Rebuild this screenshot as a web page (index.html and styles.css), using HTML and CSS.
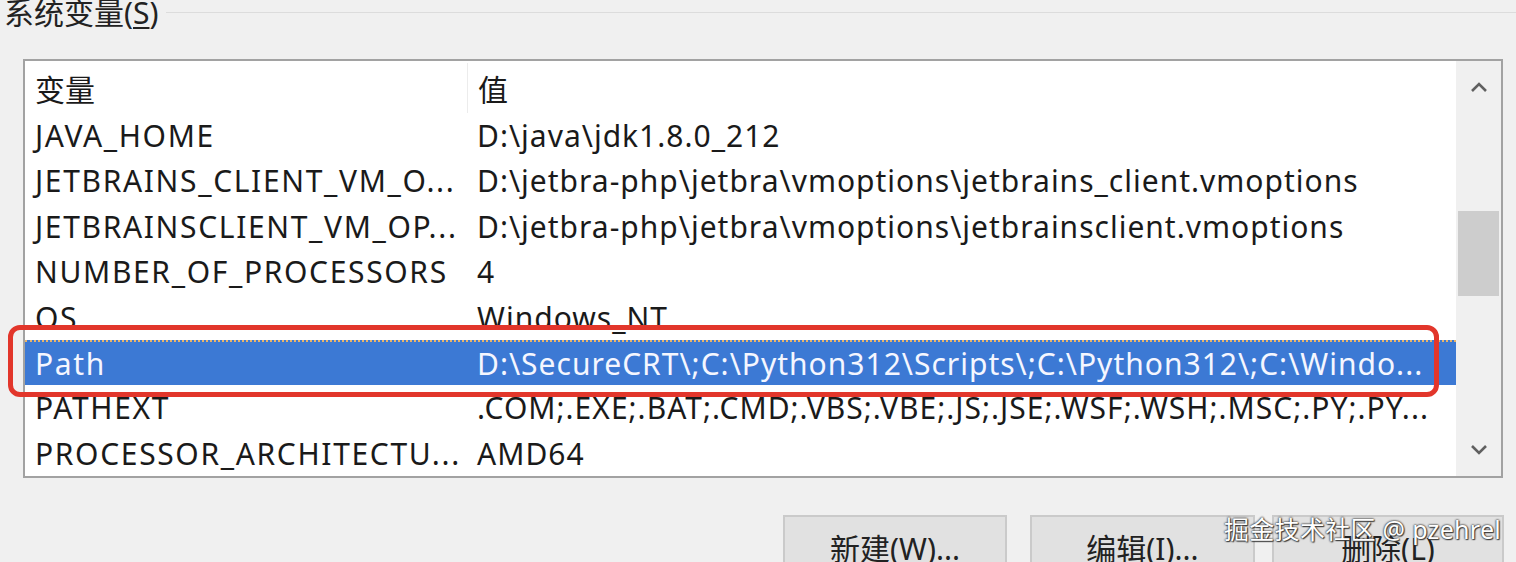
FILE: index.html
```html
<!DOCTYPE html>
<html lang="zh-CN">
<head>
<meta charset="utf-8">
<title>系统变量</title>
<link rel="stylesheet" href="styles.css">
</head>
<body>
<div class="page">
  <div class="group-title">
    <span class="title-text">系统变量(<u>S</u>)</span>
    <span class="group-line"></span>
  </div>
  <div class="listbox">
    <div class="list">
      <div class="row header">
        <div class="c1">变量</div>
        <div class="c2">值</div>
      </div>
      <div class="row"><div class="c1">JAVA_HOME</div><div class="c2">D:\java\jdk1.8.0_212</div></div>
      <div class="row"><div class="c1">JETBRAINS_CLIENT_VM_O...</div><div class="c2">D:\jetbra-php\jetbra\vmoptions\jetbrains_client.vmoptions</div></div>
      <div class="row"><div class="c1">JETBRAINSCLIENT_VM_OP...</div><div class="c2">D:\jetbra-php\jetbra\vmoptions\jetbrainsclient.vmoptions</div></div>
      <div class="row"><div class="c1">NUMBER_OF_PROCESSORS</div><div class="c2">4</div></div>
      <div class="row"><div class="c1">OS</div><div class="c2">Windows_NT</div></div>
      <div class="row selected"><div class="c1">Path</div><div class="c2">D:\SecureCRT\;C:\Python312\Scripts\;C:\Python312\;C:\Windo...</div></div>
      <div class="row"><div class="c1">PATHEXT</div><div class="c2">.COM;.EXE;.BAT;.CMD;.VBS;.VBE;.JS;.JSE;.WSF;.WSH;.MSC;.PY;.PY...</div></div>
      <div class="row"><div class="c1">PROCESSOR_ARCHITECTU...</div><div class="c2">AMD64</div></div>
    </div>
    <div class="scrollbar">
      <div class="arrow">
        <svg width="18" height="12" viewBox="0 0 18 12"><path d="M2 10 L9 3 L16 10" fill="none" stroke="#606060" stroke-width="2.6"/></svg>
      </div>
      <div class="track">
        <div class="thumb"></div>
      </div>
      <div class="arrow">
        <svg width="18" height="12" viewBox="0 0 18 12"><path d="M2 2 L9 9 L16 2" fill="none" stroke="#606060" stroke-width="2.6"/></svg>
      </div>
    </div>
  </div>
  <div class="buttons">
    <div class="btn b1">新建(<u>W</u>)...</div>
    <div class="btn b2">编辑(<u>I</u>)...</div>
    <div class="btn b3">删除(<u>L</u>)</div>
  </div>
  <div class="highlight"></div>
  <div class="watermark">掘金技术社区 @ pzehrel</div>
</div>
</body>
</html>
```

FILE: styles.css
```css
* { box-sizing: border-box; }
html, body {
  margin: 0;
  padding: 0;
  background: #f0f0f0;
  overflow: hidden;
}
.page {
  position: relative;
  width: 1516px;
  height: 562px;
  font-family: "Noto Sans", "Noto Sans CJK SC", sans-serif;
  font-size: 30px;
  color: #1a1a1a;
}
.group-title {
  display: flex;
  align-items: flex-start;
  height: 59px;
  padding-left: 4px;
}
.title-text {
  line-height: 30px;
  margin-top: -2px;
  color: #222;
  white-space: nowrap;
}
.title-text u { text-decoration-thickness: 2px; text-underline-offset: 3px; }
.group-line {
  flex: 1;
  height: 1px;
  margin-top: 12px;
  margin-left: 8px;
  background: #dcdcdc;
}
.listbox {
  margin-left: 23px;
  width: 1480px;
  height: 419px;
  border: 2px solid #a2a2a2;
  background: #fff;
  display: flex;
  overflow: hidden;
}
.list {
  flex: 1;
  display: flex;
  flex-direction: column;
}
.row {
  display: flex;
  height: 45.75px;
  align-items: center;
  white-space: nowrap;
}
.row.header {
  height: 52px;
  padding-top: 2px;
}
.c1 {
  width: 442px;
  padding-left: 10px;
  flex: none;
  letter-spacing: 1.65px;
}
.c2 {
  flex: 1;
  padding-left: 10px;
  letter-spacing: 1px;
}
.header .c1, .header .c2 { letter-spacing: 0; }
.header .c2 {
  border-left: 1px solid #ececec;
  height: 100%;
  display: flex;
  align-items: center;
}
.row.selected {
  background: #3c79d4;
  color: #f4f6ff;
  border-top: 2px dotted #e8b46a;
}
.scrollbar {
  width: 45px;
  flex: none;
  background: #f0f0f0;
  display: flex;
  flex-direction: column;
}
.arrow {
  height: 52px;
  display: flex;
  align-items: center;
  justify-content: center;
}
.track {
  flex: 1;
  padding: 98px 2px 0 2px;
}
.thumb {
  height: 85px;
  background: #cdcdcd;
}
.buttons {
  display: flex;
  margin-top: 37px;
  padding-left: 783px;
  gap: 23px;
}
.btn {
  height: 60px;
  background: #e1e1e1;
  border: 2px solid #cacaca;
  display: flex;
  justify-content: center;
  padding-top: 16px;
  line-height: 32px;
  color: #222;
}
.btn u { text-decoration-thickness: 2px; text-underline-offset: 3px; }
.b1 { width: 224px; }
.b2 { width: 225px; }
.b3 { width: 232px; margin-left: -6px; }
.highlight {
  position: absolute;
  left: 8px;
  top: 325px;
  width: 1431px;
  height: 72px;
  border: 5px solid #e2362b;
  border-radius: 12px;
}
.watermark {
  position: absolute;
  left: 1224px;
  top: 512px;
  font-size: 25px;
  line-height: 34px;
  letter-spacing: 0.3px;
  color: #fff;
  white-space: nowrap;
  text-shadow: 0 0 2px #333, 0 0 2px #333, 1px 1px 1px #444;
}
```
